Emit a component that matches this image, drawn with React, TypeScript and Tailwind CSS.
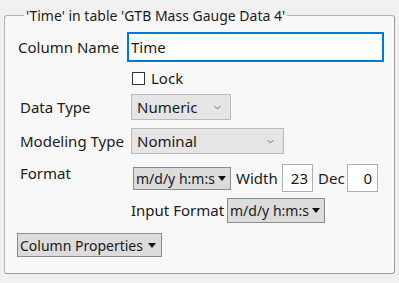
import { useState } from "react";

const Chevron = () => (
  <svg width="7" height="5" viewBox="0 0 7 5" className="shrink-0">
    <path d="M0.5 1 L3.5 4 L6.5 1" fill="none" stroke="#7a7a7a" strokeWidth="1" />
  </svg>
);

const Caret = () => (
  <svg width="8" height="5" viewBox="0 0 8 5" className="shrink-0">
    <path d="M0 0 H8 L4 5 Z" fill="#111" />
  </svg>
);

const App = () => {
  const [name, setName] = useState("Time");
  const [locked, setLocked] = useState(false);

  return (
    <div className="h-[283px] w-[399px] whitespace-nowrap bg-[#f0f0f0] px-[4px] pt-[6px] font-['Noto_Sans',sans-serif] text-[15px] leading-[19px] text-[#1a1a1a]">
      <fieldset className="h-[268px] rounded-[3px] border border-[#b4b4b4] border-r-[#9c9c9c] border-b-[#9c9c9c] bg-[#f8f8f8] pl-[13px] pr-[10px]">
        <legend className="ml-[6px] px-[2px] text-[14px]">'Time' in table 'GTB Mass Gauge Data 4'</legend>

        {/* Column name */}
        <div className="mt-[7px] flex items-center">
          <span className="w-[109px]">Column Name</span>
          <input
            value={name}
            onChange={(e) => setName(e.target.value)}
            className="h-[30px] w-[257px] border-2 border-[#0078d7] bg-white px-[2px] text-[15px] outline-none"
          />
        </div>

        {/* Lock */}
        <label className="mt-[7px] ml-[114px] flex items-center gap-[6px]">
          <span
            onClick={() => setLocked(!locked)}
            className="flex h-[13px] w-[13px] items-center justify-center border border-[#333] bg-white text-[10px]"
          >
            {locked ? "✓" : ""}
          </span>
          <span>Lock</span>
        </label>

        {/* Data type */}
        <div className="mt-[6px] flex items-center">
          <span className="ml-[2px] w-[111px]">Data Type</span>
          <button className="flex h-[26px] w-[100px] items-center justify-between border border-[#bcbcbc] bg-[#e5e5e5] pl-[5px] pr-[9px] text-[#1a1a1a]">
            Numeric
            <Chevron />
          </button>
        </div>

        {/* Modeling type */}
        <div className="mt-[8px] flex items-center">
          <span className="ml-[2px] w-[111px]">Modeling Type</span>
          <button className="flex h-[26px] w-[153px] items-center justify-between border border-[#bcbcbc] bg-[#e5e5e5] pl-[5px] pr-[9px] text-[#1a1a1a]">
            Nominal
            <Chevron />
          </button>
        </div>

        {/* Format */}
        <div className="mt-[10px] flex items-center">
          <span className="ml-[2px] w-[113px] self-start">Format</span>
          <button className="flex h-[23px] w-[98px] items-center justify-between border border-[#8a8a8a] bg-[#dcdcdc] pl-[2px] pr-[4px] text-[14px] text-[#1a1a1a]">
            m/d/y h:m:s
            <Caret />
          </button>
          <span className="w-[51px] pl-[5px]">Width</span>
          <span className="flex h-[28px] w-[31px] items-center justify-end border border-[#b0b0b0] bg-white pr-[4px]">23</span>
          <span className="w-[34px] pl-[5px]">Dec</span>
          <span className="flex h-[28px] w-[31px] items-center justify-end border border-[#b0b0b0] bg-white pr-[5px]">0</span>
        </div>

        {/* Input format */}
        <div className="mt-[6px] flex items-center">
          <span className="ml-[113px] w-[96px]">Input Format</span>
          <button className="flex h-[25px] w-[98px] items-center justify-between border border-[#8a8a8a] bg-[#dcdcdc] pl-[2px] pr-[4px] text-[14px] text-[#1a1a1a]">
            m/d/y h:m:s
            <Caret />
          </button>
        </div>

        {/* Column properties */}
        <button className="mt-[10px] -ml-[1px] flex h-[24px] w-[145px] items-center justify-between border border-[#8a8a8a] bg-[#dcdcdc] pl-[2px] pr-[5px] text-[14px] text-[#1a1a1a]">
          Column Properties
          <Caret />
        </button>
      </fieldset>
    </div>
  );
};

export default App;
